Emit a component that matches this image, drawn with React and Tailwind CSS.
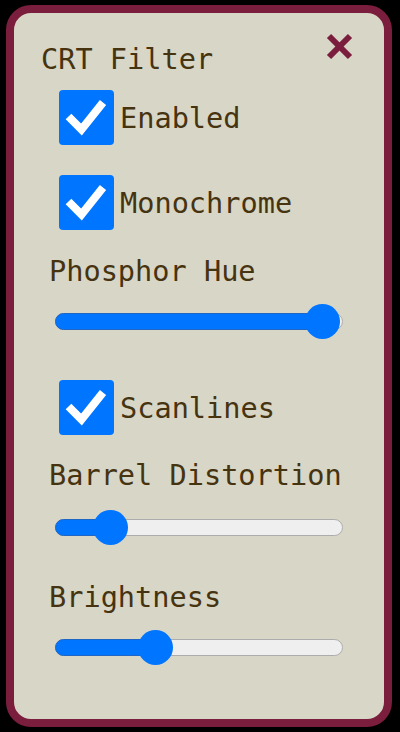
import React, { useState } from 'react';

const font = { fontFamily: '"DejaVu Sans Mono", "Liberation Mono", monospace' };

function Check({ label, checked, onToggle }) {
  return (
    <button type="button" onClick={onToggle} className="flex items-center h-[55px] ml-[45px] text-left">
      <span className="flex items-center justify-center w-[55px] h-[55px] rounded-[4px] bg-[#0075ff] shrink-0">
        {checked && (
          <svg width="55" height="55" viewBox="0 0 55 55">
            <polyline
              points="9.5,26.5 22.5,39.5 44,12.5"
              fill="none"
              stroke="#fff"
              strokeWidth="8"
              strokeLinecap="butt"
              strokeLinejoin="miter"
            />
          </svg>
        )}
      </span>
      <span className="ml-[6px] text-[28.6px] leading-[34px] text-[#46330f]">{label}</span>
    </button>
  );
}

function Slider({ value }) {
  // value 0..1, thumb is 35px wide on a 288px track
  const left = value * (288 - 35);
  return (
    <div className="relative ml-[41px] w-[288px] h-[35px]">
      <div className="absolute left-0 right-0 top-[9px] h-[17px] rounded-full bg-[#efefef] border border-[#acacac]" />
      <div
        className="absolute left-0 top-[9px] h-[17px] rounded-full bg-[#0075ff] border border-[#1f66c4]"
        style={{ width: left + 17.5 }}
      />
      <div
        className="absolute top-0 w-[35px] h-[35px] rounded-full bg-[#0075ff]"
        style={{ left }}
      />
    </div>
  );
}

export default function App() {
  const [enabled, setEnabled] = useState(true);
  const [mono, setMono] = useState(true);
  const [scan, setScan] = useState(true);

  return (
    <div className="w-[400px] h-[732px] bg-black pt-[5px] pl-[6px]" style={font}>
      <div className="w-[386px] h-[722px] rounded-[25px] border-8 border-[#7b1d3c] bg-[#d8d6c7]">
        <div className="flex flex-col pt-[20px]">
          <div className="flex justify-between items-start pl-[27px] pr-[31px]">
            <div className="mt-[9px] text-[28.6px] leading-[34px] text-[#46330f]">CRT Filter</div>
            <svg width="27" height="27" viewBox="0 0 27 27">
              <line x1="3" y1="3" x2="24" y2="24" stroke="#7b1d3c" strokeWidth="6" />
              <line x1="24" y1="3" x2="3" y2="24" stroke="#7b1d3c" strokeWidth="6" />
            </svg>
          </div>

          <div className="mt-[14px]">
            <Check label="Enabled" checked={enabled} onToggle={() => setEnabled(!enabled)} />
          </div>
          <div className="mt-[30px]">
            <Check label="Monochrome" checked={mono} onToggle={() => setMono(!mono)} />
          </div>

          <div className="mt-[24px] ml-[35px] text-[28.6px] leading-[34px] text-[#46330f]">Phosphor Hue</div>
          <div className="mt-[16px]">
            <Slider value={0.99} />
          </div>

          <div className="mt-[41px]">
            <Check label="Scanlines" checked={scan} onToggle={() => setScan(!scan)} />
          </div>

          <div className="mt-[23px] ml-[35px] text-[28.6px] leading-[34px] text-[#46330f]">Barrel Distortion</div>
          <div className="mt-[18px]">
            <Slider value={0.15} />
          </div>

          <div className="mt-[35px] ml-[35px] text-[28.6px] leading-[34px] text-[#46330f]">Brightness</div>
          <div className="mt-[16px]">
            <Slider value={0.33} />
          </div>
        </div>
      </div>
    </div>
  );
}
